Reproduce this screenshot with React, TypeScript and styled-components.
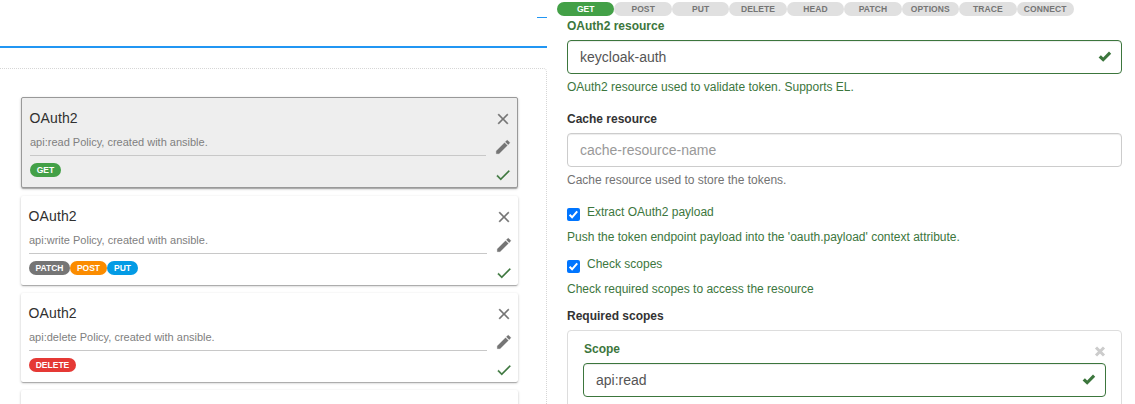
import React from "react";
import styled, { createGlobalStyle } from "styled-components";

const GlobalStyle = createGlobalStyle`
  *, *::before, *::after { box-sizing: border-box; }
  body {
    margin: 0;
    background: #fff;
    font-family: "Liberation Sans", Arial, sans-serif;
    overflow: hidden;
  }
`;

const Page = styled.div`
  display: flex;
  gap: 10px;
  height: 404px;
  overflow: hidden;
`;

/* Left column: policy flow */

const FlowColumn = styled.section`
  width: 547px;
  flex: none;
  display: flex;
  flex-direction: column;
`;

const FlowHeader = styled.header`
  display: flex;
  justify-content: flex-end;
  height: 48px;
  flex: none;
  padding-top: 17px;
  border-bottom: 2px solid #2196f3;
`;

const InkBar = styled.span`
  width: 10px;
  height: 1px;
  background: #2196f3;
`;

const DropZone = styled.div`
  margin-top: 20px;
  height: 500px;
  flex: none;
  display: flex;
  flex-direction: column;
  gap: 8px;
  padding: 28px 28px 0 21px;
  border: 1px dotted #d6d6d6;
  border-left: 0;
  border-top-right-radius: 4px;
`;

const Card = styled.article<{ $selected?: boolean }>`
  display: flex;
  flex: none;
  justify-content: space-between;
  height: ${(p) => (p.$selected ? 91 : 89)}px;
  border-radius: 2px;
  border: ${(p) => (p.$selected ? "1px solid #999" : "0")};
  background: ${(p) => (p.$selected ? "#eee" : "#fff")};
  box-shadow: 0 1px 3px 0 rgba(0, 0, 0, 0.2), 0 1px 1px 0 rgba(0, 0, 0, 0.14),
    0 2px 1px -1px rgba(0, 0, 0, 0.12);
  padding: 0 5px 0 8px;
`;

const CardBody = styled.div<{ $selected?: boolean }>`
  width: ${(p) => (p.$selected ? 456 : 458)}px;
  display: flex;
  flex-direction: column;
`;

const CardTitle = styled.h3`
  margin: 11px 0 0 -0.4px;
  font-size: 14px;
  line-height: 18px;
  font-weight: 400;
  letter-spacing: 0.1px;
  color: #303030;
`;

const CardText = styled.p`
  margin: 7px 0 0;
  height: 22px;
  font-size: 11px;
  line-height: 16px;
  color: #808080;
  border-bottom: 1px solid #c8c8c8;
`;

const BadgeRow = styled.div`
  display: flex;
  margin-top: 7px;
`;

const Badge = styled.span<{ $color: string; $width: number }>`
  width: ${(p) => p.$width}px;
  height: 14px;
  border-radius: 7px;
  background: ${(p) => p.$color};
  color: #fff;
  font-size: 8.5px;
  font-weight: 700;
  line-height: 14px;
  text-align: center;
`;

const Actions = styled.div`
  display: flex;
  flex-direction: column;
  gap: 10px;
  padding-top: 12px;
`;

const ActionIcon = styled.svg<{ $ok?: boolean }>`
  width: 18px;
  height: 18px;
  display: block;
  fill: ${(p) => (p.$ok ? "#3c763d" : "#757575")};
  stroke: ${(p) => (p.$ok ? "#3c763d" : "#757575")};
  stroke-width: 0.3;
`;

/* Right column: policy configuration */

const ConfigColumn = styled.section`
  width: 565px;
  flex: none;
  padding-top: 2px;
`;

const MethodRow = styled.div`
  display: flex;
  width: 517px;
  height: 14px;
`;

const Method = styled.span<{ $active?: boolean }>`
  flex: 1 1 0;
  border-radius: 7px;
  background: ${(p) => (p.$active ? "#43a047" : "#e0e0e0")};
  color: ${(p) => (p.$active ? "#fff" : "#757575")};
  font-size: 8.5px;
  font-weight: 700;
  line-height: 14px;
  letter-spacing: ${(p) => (p.$active ? 0 : 0.1)}px;
  text-align: center;
`;

const Form = styled.div`
  padding-left: 10px;
`;

const Label = styled.label<{ $valid?: boolean }>`
  display: block;
  height: 17px;
  font-size: 12px;
  line-height: 17px;
  font-weight: 700;
  color: ${(p) => (p.$valid ? "#3c763d" : "#333")};
`;

const InputBox = styled.div<{ $valid?: boolean }>`
  display: flex;
  align-items: center;
  justify-content: space-between;
  height: 34px;
  padding: 0 9px 0 12px;
  border: 1px solid ${(p) => (p.$valid ? "#3c763d" : "#ccc")};
  border-radius: 4px;
  font-size: 14px;
  line-height: 20px;
  color: ${(p) => (p.$valid ? "#555" : "#999")};
  box-shadow: inset 0 1px 1px rgba(0, 0, 0, 0.075);
`;

const Help = styled.p<{ $valid?: boolean }>`
  margin: 0;
  height: 17px;
  font-size: 12px;
  line-height: 17px;
  color: ${(p) => (p.$valid ? "#3c763d" : "#737373")};
`;

const Field = styled.div`
  display: flex;
  flex-direction: column;
  gap: 5px;
`;

const TextField = styled(Field)<{ $top: number }>`
  padding-top: ${(p) => p.$top}px;
`;

const CheckField = styled.div<{ $top: number }>`
  padding-top: ${(p) => p.$top}px;
  display: flex;
  flex-direction: column;
  gap: 8px;
`;

const CheckRow = styled.div`
  display: flex;
  gap: 7px;
  height: 17px;
  font-size: 12px;
  line-height: 17px;
  color: #3c763d;
`;

const CheckMark = styled.svg`
  width: 13px;
  height: 13px;
  margin-top: 4px;
  flex: none;
`;

const Group = styled.div`
  margin-top: 5px;
  height: 120px;
  border: 1px solid #ddd;
  border-radius: 4px;
  padding: 10px 15px 0;
`;

const GroupHead = styled.div`
  display: flex;
  justify-content: space-between;
  height: 22px;
`;

const GroupLabel = styled(Label)`
  padding-left: 1px;
`;

const RemoveIcon = styled.svg`
  width: 12px;
  height: 12px;
  margin: 4px 0 0 0;
`;

const ValidSvg = styled.svg`
  width: 14px;
  height: 14px;
  display: block;
`;

const ValidIcon = () => (
  <ValidSvg viewBox="0 0 14 14">
    <path d="M0.6 7.4 L2.9 5.2 L5.2 7.4 L11 1.4 L13.2 3.8 L5.2 11.8 Z" fill="#3c763d" />
  </ValidSvg>
);

const Checkbox = () => (
  <CheckMark viewBox="0 0 13 13">
    <rect width="13" height="13" rx="2" fill="#0075ff" />
    <path d="M2.6 6.8 L5.1 9.3 L10.2 3.4" fill="none" stroke="#fff" strokeWidth="2" />
  </CheckMark>
);

const colors = {
  GET: "#43a047",
  PATCH: "#757575",
  POST: "#fb8c00",
  PUT: "#039be5",
  DELETE: "#e53935",
};

const widths = { GET: 31, PATCH: 41, POST: 37, PUT: 31, DELETE: 47 };

type BadgeName = keyof typeof colors;

interface PolicyProps {
  text: string;
  methods: BadgeName[];
  selected?: boolean;
}

const policies: PolicyProps[] = [
  { text: "api:read Policy, created with ansible.", methods: ["GET"], selected: true },
  { text: "api:write Policy, created with ansible.", methods: ["PATCH", "POST", "PUT"] },
  { text: "api:delete Policy, created with ansible.", methods: ["DELETE"] },
];

const methodNames = ["GET", "POST", "PUT", "DELETE", "HEAD", "PATCH", "OPTIONS", "TRACE", "CONNECT"];

const Policy = ({ text, methods, selected }: PolicyProps) => (
  <Card $selected={selected}>
    <CardBody $selected={selected}>
      <CardTitle>OAuth2</CardTitle>
      <CardText>{text}</CardText>
      <BadgeRow>
        {methods.map((m) => (
          <Badge key={m} $color={colors[m]} $width={widths[m]}>
            {m}
          </Badge>
        ))}
      </BadgeRow>
    </CardBody>
    <Actions>
      <ActionIcon viewBox="0 0 24 24">
        <path d="M19 6.41L17.59 5 12 10.59 6.41 5 5 6.41 10.59 12 5 17.59 6.41 19 12 13.41 17.59 19 19 17.59 13.41 12z" />
      </ActionIcon>
      <ActionIcon viewBox="0 0 24 24">
        <path d="M3 17.25V21h3.75L17.81 9.94l-3.75-3.75L3 17.25zM20.71 7.04a.996.996 0 0 0 0-1.41l-2.34-2.34a.996.996 0 0 0-1.41 0l-1.83 1.83 3.75 3.75 1.83-1.83z" />
      </ActionIcon>
      <ActionIcon viewBox="0 0 24 24" $ok>
        <path d="M9 16.17L4.83 12l-1.42 1.41L9 19 21 7l-1.41-1.41z" />
      </ActionIcon>
    </Actions>
  </Card>
);

export default function App() {
  return (
    <>
      <GlobalStyle />
      <Page>
        <FlowColumn>
          <FlowHeader>
            <InkBar />
          </FlowHeader>
          <DropZone>
            {policies.map((p) => (
              <Policy key={p.text} {...p} />
            ))}
            <Card />
          </DropZone>
        </FlowColumn>
        <ConfigColumn>
          <MethodRow>
            {methodNames.map((m) => (
              <Method key={m} $active={m === "GET"}>
                {m}
              </Method>
            ))}
          </MethodRow>
          <Form>
            <TextField $top={2}>
              <Label $valid>OAuth2 resource</Label>
              <InputBox $valid>
                keycloak-auth
                <ValidIcon />
              </InputBox>
              <Help $valid>OAuth2 resource used to validate token. Supports EL.</Help>
            </TextField>
            <TextField $top={15}>
              <Label>Cache resource</Label>
              <InputBox>cache-resource-name</InputBox>
              <Help>Cache resource used to store the tokens.</Help>
            </TextField>
            <CheckField $top={15}>
              <CheckRow>
                <Checkbox />
                Extract OAuth2 payload
              </CheckRow>
              <Help $valid>Push the token endpoint payload into the 'oauth.payload' context attribute.</Help>
            </CheckField>
            <CheckField $top={10}>
              <CheckRow>
                <Checkbox />
                Check scopes
              </CheckRow>
              <Help $valid>Check required scopes to access the resource</Help>
            </CheckField>
            <TextField $top={10}>
              <Label>Required scopes</Label>
            </TextField>
            <Group>
              <GroupHead>
                <GroupLabel $valid>Scope</GroupLabel>
                <RemoveIcon viewBox="0 0 12 12">
                  <path d="M2 2.5 L10 10.5 M10 2.5 L2 10.5" stroke="#ccc" strokeWidth="3" />
                </RemoveIcon>
              </GroupHead>
              <InputBox $valid>
                api:read
                <ValidIcon />
              </InputBox>
            </Group>
          </Form>
        </ConfigColumn>
      </Page>
    </>
  );
}
